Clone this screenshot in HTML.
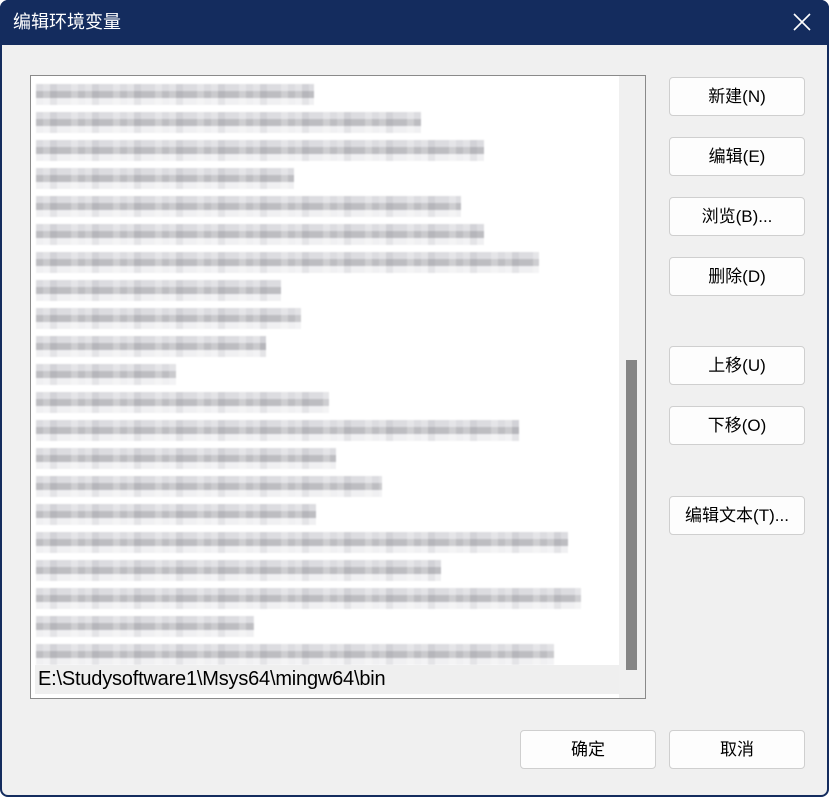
<!DOCTYPE html>
<html><head><meta charset="utf-8"><style>
*{margin:0;padding:0;box-sizing:border-box}
html,body{width:829px;height:797px;overflow:hidden;background:#fff}
body{font-family:"Liberation Sans","Noto Sans CJK SC",sans-serif}
.win{position:absolute;left:0;top:0;width:829px;height:797px;background:#f0f0f0;border-radius:8px;overflow:hidden;box-shadow:inset 0 0 0 2px #142c5e}
.title{position:absolute;left:0;top:0;width:829px;height:45px;background:#142c5e;color:#fff;font-size:18px;line-height:45px;padding-left:13px}
.x{position:absolute;right:16px;top:11px}
.list{position:absolute;left:30px;top:75px;width:616px;height:624px;border:1px solid #8a8a8a;background:#fff}
.sb{position:absolute;left:588px;top:0;width:26px;height:622px;background:#f0f0f0}
.thumb{position:absolute;left:7px;top:284px;width:11px;height:310px;background:#858585}
.row{position:absolute;left:5px;height:21px;filter:blur(0.7px);
background:
repeating-linear-gradient(90deg,rgba(255,255,255,0) 0 7px,rgba(255,255,255,.2) 7px 14px,rgba(120,120,130,.1) 14px 21px,rgba(255,255,255,0) 21px 35px,rgba(255,255,255,.25) 35px 42px),
linear-gradient(#dcdce0 0 33%,#bdbdc1 33% 66%,#f0f0f2 66%)}
.sel{position:absolute;left:4px;top:589px;width:584px;height:29px;background:#efefef;font-size:20px;line-height:29px;padding-left:3px;color:#000;letter-spacing:-0.2px}
.btn{position:absolute;width:136px;height:39px;background:#fdfdfd;border:1px solid #cfcfcf;border-radius:4px;font-size:17px;text-align:center;line-height:37px;color:#000}
</style></head><body>
<div class="win">
<div class="title">编辑环境变量
<svg class="x" width="22" height="22" viewBox="0 0 22 22"><path d="M3 3L19 19M19 3L3 19" stroke="#fff" stroke-width="1.6"/></svg></div>
<div class="list">
<div class="row" style="top:8px;width:278px"></div>
<div class="row" style="top:36px;width:385px"></div>
<div class="row" style="top:64px;width:448px"></div>
<div class="row" style="top:92px;width:258px"></div>
<div class="row" style="top:120px;width:425px"></div>
<div class="row" style="top:148px;width:448px"></div>
<div class="row" style="top:176px;width:503px"></div>
<div class="row" style="top:204px;width:245px"></div>
<div class="row" style="top:232px;width:265px"></div>
<div class="row" style="top:260px;width:230px"></div>
<div class="row" style="top:288px;width:140px"></div>
<div class="row" style="top:316px;width:293px"></div>
<div class="row" style="top:344px;width:483px"></div>
<div class="row" style="top:372px;width:300px"></div>
<div class="row" style="top:400px;width:346px"></div>
<div class="row" style="top:428px;width:280px"></div>
<div class="row" style="top:456px;width:532px"></div>
<div class="row" style="top:484px;width:405px"></div>
<div class="row" style="top:512px;width:545px"></div>
<div class="row" style="top:540px;width:218px"></div>
<div class="row" style="top:568px;width:518px"></div>
<div class="sel">E:\Studysoftware1\Msys64\mingw64\bin</div>
<div class="sb"><div class="thumb"></div></div>
</div>
<div class="btn" style="left:669px;top:77px">新建(N)</div>
<div class="btn" style="left:669px;top:137px">编辑(E)</div>
<div class="btn" style="left:669px;top:197px">浏览(B)...</div>
<div class="btn" style="left:669px;top:257px">删除(D)</div>
<div class="btn" style="left:669px;top:346px">上移(U)</div>
<div class="btn" style="left:669px;top:406px">下移(O)</div>
<div class="btn" style="left:669px;top:496px">编辑文本(T)...</div>
<div class="btn" style="left:520px;top:730px">确定</div>
<div class="btn" style="left:669px;top:730px">取消</div>
</div>
</body></html>
